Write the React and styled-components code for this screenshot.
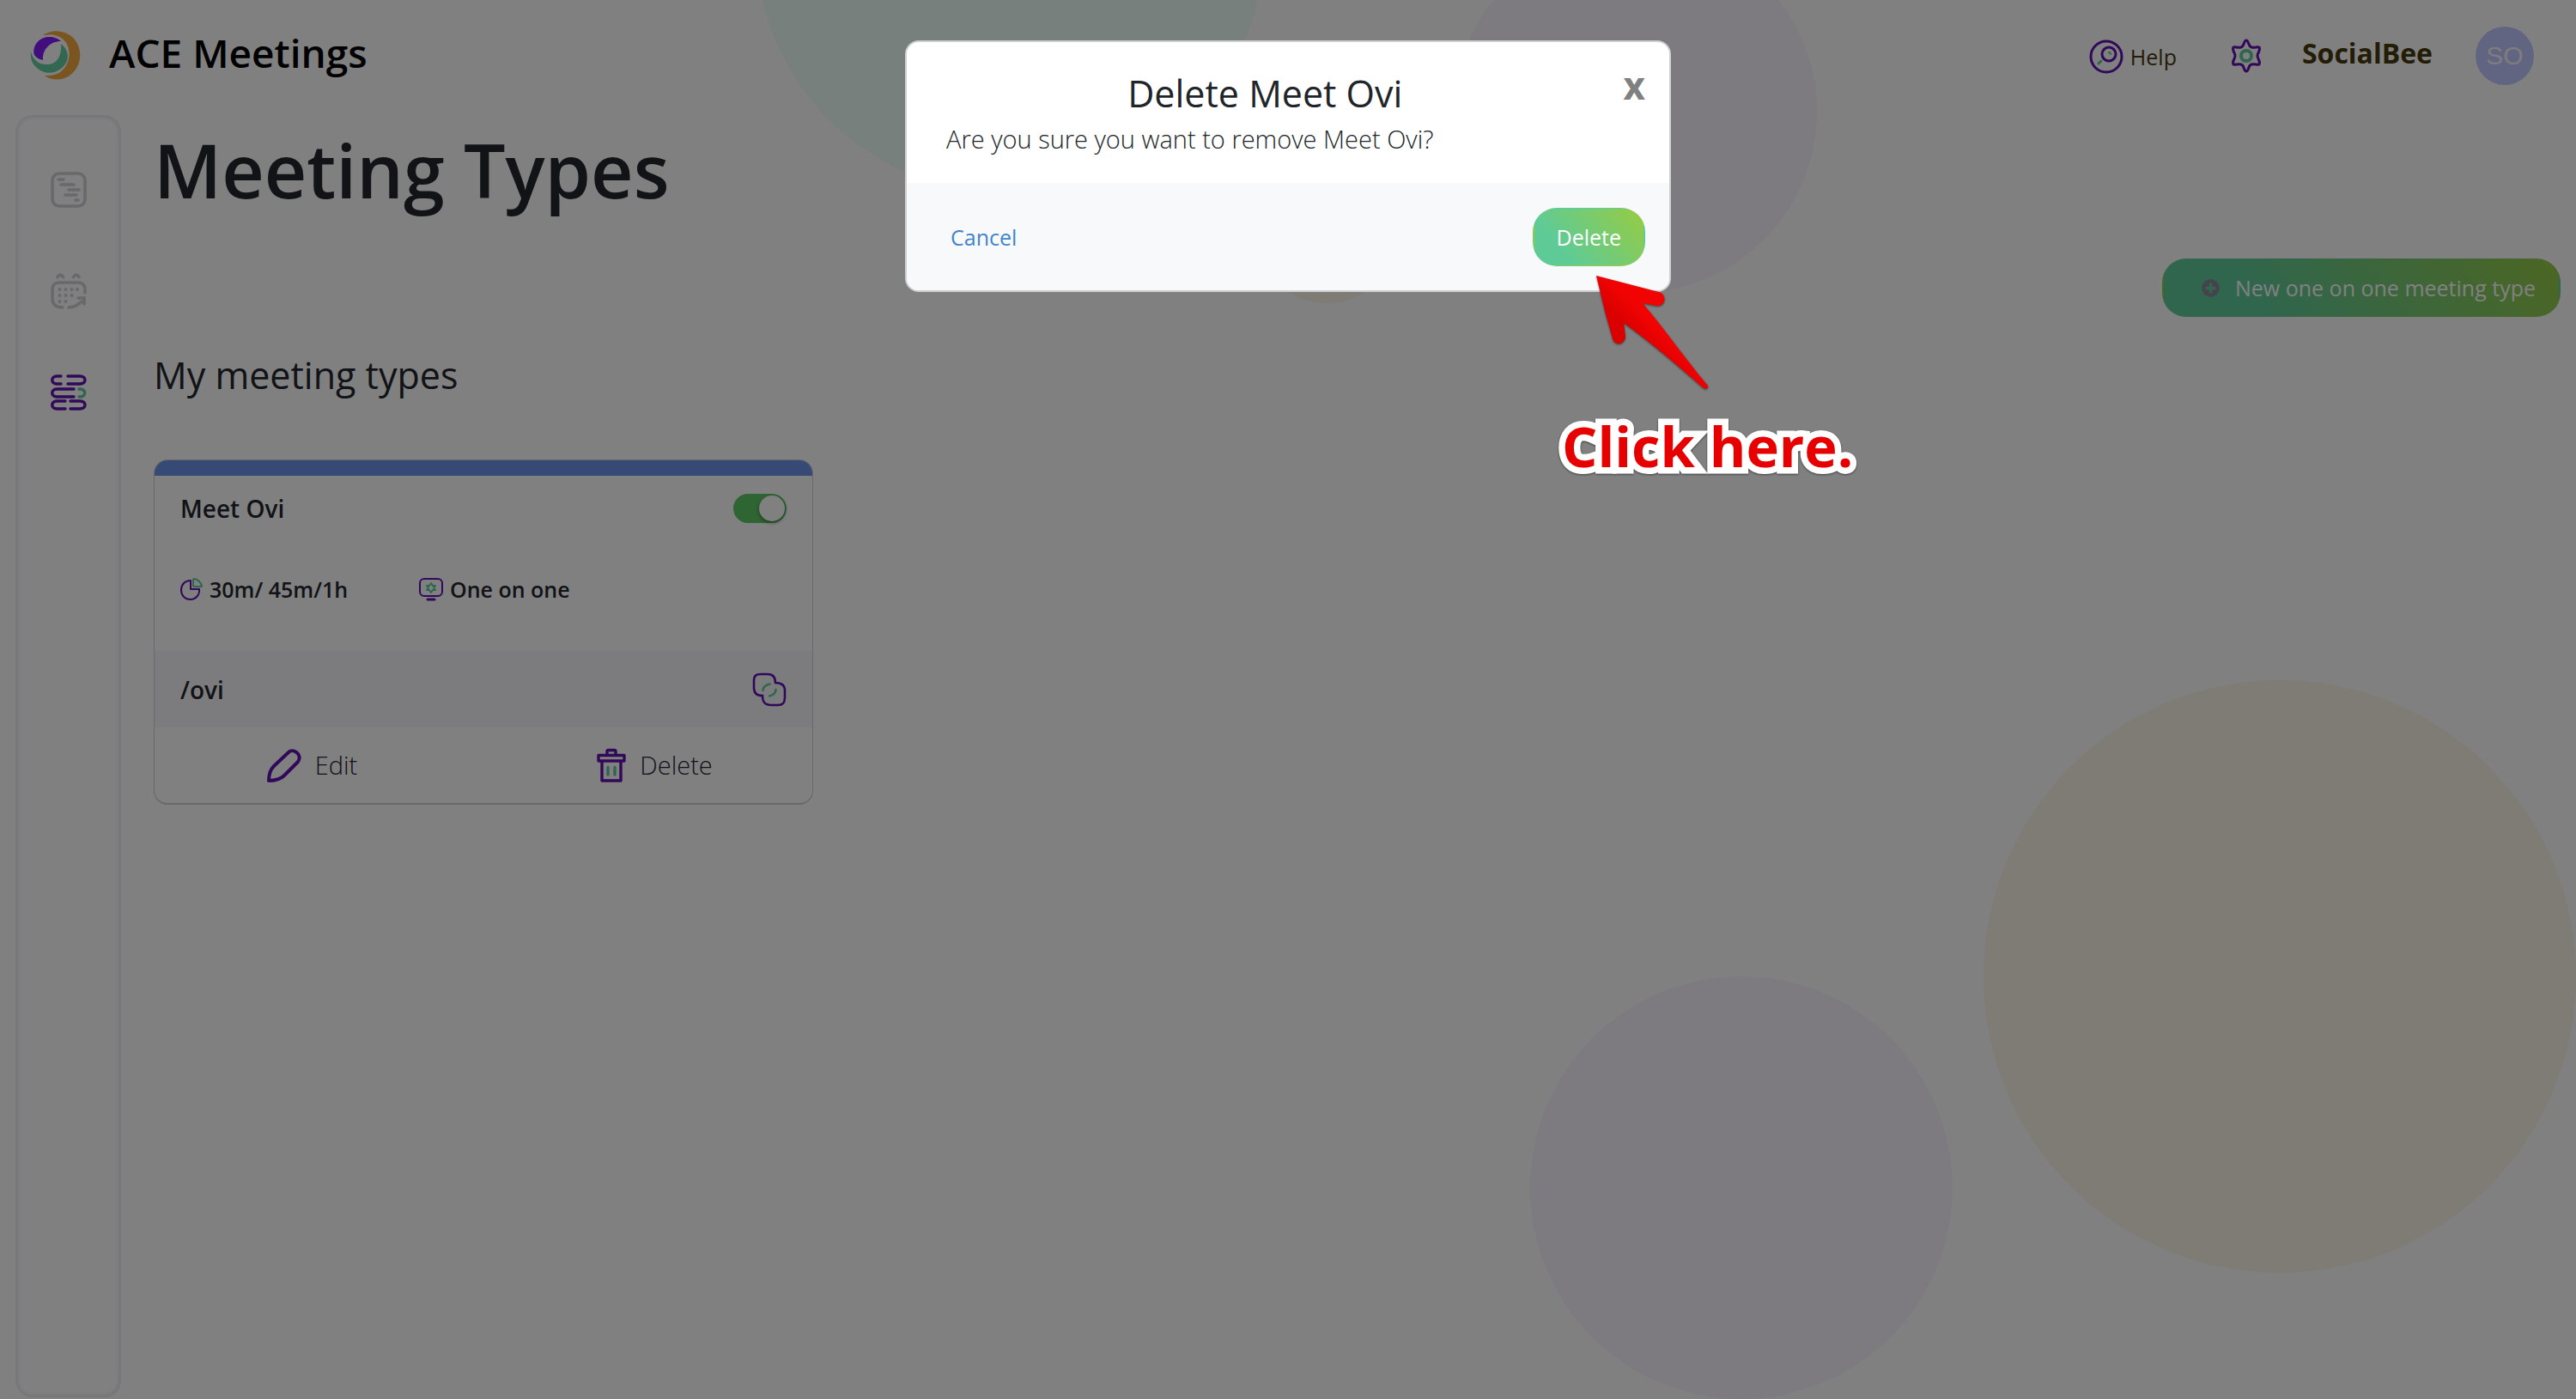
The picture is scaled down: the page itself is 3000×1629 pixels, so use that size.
import React, { useState } from 'react'
import styled, { createGlobalStyle } from 'styled-components';
import { FaPlusCircle } from 'react-icons/fa'

const purple = '#6110ae'
const green = '#5ecb9b'

const GlobalStyle = createGlobalStyle`
    * {
        box-sizing: border-box;
    }

    body {
        margin: 0;
        background: #fefeff;
        color: #212529;
        font-family: 'Open Sans', 'Noto Sans', sans-serif;
        font-size: 28px;
        line-height: 40px;
    }

    button {
        font: inherit;
        cursor: pointer;
    }

    h1, h2, h3, p {
        margin: 0;
    }
`

//icons

const LogoIcon = () => (
    <svg width="60" height="58" viewBox="0 0 60 58">
        <path d="M15 5 C26 -3 43 -1 52 10 C62 23 60 42 46 52 C37 58 25 58 17 52 C31 53 40 47 44 36 C49 21 42 8 29 5 C24 4 20 5 15 5Z" fill="#f5a83c" />
        <path d="M5 28 C2 17 11 7 22 7 C28 7 33 9 36 12 C24 12 14 21 15 34 C10 33 7 31 5 28Z" fill="#8218f5" />
        <path d="M1 24 C3 34 11 40 21 39 C33 38 37 27 36 15 C44 21 47 32 40 40 C32 50 17 52 8 43 C2 38 0 31 1 24Z" fill="#62cda0" />
    </svg>
)

const AgendaIcon = () => (
    <svg width="42" height="42" viewBox="0 0 42 42" fill="none" stroke="#d0d0d2" strokeWidth="3.6" strokeLinecap="round">
        <rect x="2" y="2" width="38" height="38" rx="8" />
        <path d="M9 9h6M12 15h15M21 21h12M17 27h13M29 33h3" />
    </svg>
)

const CalendarIcon = () => (
    <svg width="42" height="42" viewBox="0 0 42 42" fill="none" stroke="#d0d0d2" strokeWidth="3.6" strokeLinecap="round">
        <path d="M8 4.500q3.500-5 6.500 0M26.500 4.500q3.500-5 6.500 0" />
        <path d="M14 40C6 40 2 37 2 30V19C2 13 5 11 11 11H31C37 11 40 13 40 19V23" />
        <path d="M21 40C30 40 31 36 37 33M32 29H39V36" />
        <path d="M10.500 19h.1M17.500 19h.1M24.500 19h.1M31 19h.1M10.500 26h.1M17.500 26h.1M24.500 26h.1M10.500 33h.1M17.500 33h.1" strokeWidth="4" />
    </svg>
)

const TypesIcon = () => (
    <svg width="42" height="42" viewBox="0 0 42 42" fill="none" stroke={purple} strokeWidth="3.4" strokeLinecap="round">
        <path d="M12 2H7C0 2 0 11 7 11H12M20 2H34C42 2 42 11 34 11H20" />
        <path d="M27 17H7C0 17 0 26 7 26H27" />
        <path d="M33 17C42 16 42 27 33 26" stroke={green} />
        <path d="M17 31H7C0 31 0 40 7 40H17M23 31H34C42 31 42 40 34 40H23" />
    </svg>
)

const HelpIcon = () => (
    <svg width="40" height="40" viewBox="0 0 40 40" fill="none" stroke={purple} strokeWidth="3" strokeLinecap="round">
        <circle cx="20" cy="20" r="18" />
        <circle cx="23" cy="17" r="8" />
        <path d="M14 25L11 28" stroke={green} />
        <path d="M23 15Q25 15 25 17" stroke={green} strokeWidth="2" />
    </svg>
)

const GearIcon = () => (
    <svg width="38" height="40" viewBox="0 0 38 40" fill="none" stroke={purple} strokeWidth="3" strokeLinejoin="round">
        <path d="M19 2C22 2 21 9 25 10C29 11 32 9 34 10C36 14 32 16 32 20C32 24 36 26 34 30C32 31 29 29 25 30C21 31 22 38 19 38C16 38 17 31 13 30C9 29 6 31 4 30C2 26 6 24 6 20C6 16 2 14 4 10C6 9 9 11 13 10C17 9 16 2 19 2Z" />
        <circle cx="19" cy="20" r="6" stroke={green} strokeWidth="4" />
    </svg>
)

const DurationIcon = () => (
    <svg width="26" height="26" viewBox="0 0 26 26" fill="none" stroke={purple} strokeWidth="2" strokeLinejoin="round">
        <path d="M12 3V13H22C23 19 18 25 12 25C5 25 1 20 1 14C1 8 5 3 12 3Z" />
        <path d="M16 1C20 1 25 6 25 10H16Q15 10 15 9V2Q15 1 16 1Z" stroke={green} />
    </svg>
)

const ScreenIcon = () => (
    <svg width="28" height="28" viewBox="0 0 28 28" fill="none" stroke={purple} strokeWidth="2" strokeLinecap="round">
        <rect x="1" y="2" width="26" height="20" rx="5" />
        <path d="M10 26H18" strokeWidth="3" />
        <path d="M14 7L16 10L19 10L17 12L19 15L16 15L14 18L12 15L9 15L11 12L9 10L12 10Z" stroke={green} strokeLinejoin="round" />
    </svg>
)

const CopyIcon = () => (
    <svg width="40" height="40" viewBox="0 0 40 40" fill="none" stroke={purple} strokeWidth="2.600" strokeLinecap="round">
        <path d="M12 27C5 27 2 24 2 18V10C2 4 4 2 10 2H18C24 2 27 5 27 12C35 12 38 15 38 21V29C38 35 36 38 30 38H22C15 38 12 35 12 27Z" />
        <path d="M12.500 21Q13 15 20.500 13.500M27.500 20Q27 26 20 27.500" stroke={green} />
    </svg>
)

const PencilIcon = () => (
    <svg width="40" height="40" viewBox="0 0 40 40" fill="none" stroke={purple} strokeWidth="4" strokeLinejoin="round">
        <path d="M2 38C2 30 4 25 8 21L25 5C30 0 42 7 36 16L20 32C16 36 10 38 2 38Z" />
    </svg>
)

const TrashIcon = () => (
    <svg width="34" height="40" viewBox="0 0 34 40" fill="none" stroke={purple} strokeWidth="3.400" strokeLinejoin="round">
        <path d="M2 8.500H32V15H2ZM6 15V38H28V15M12 8V4Q12 2.500 13.500 2.500H20.500Q22 2.500 22 4V8" />
        <path d="M13 22.500V31M21 22.500V31" stroke={green} strokeLinecap="round" />
    </svg>
)

const App = () => {

  const [active, setActive] = useState(true)

  return (
    <>
        <GlobalStyle />
        <Page>
            <Bubbles viewBox="0 0 3000 1629" preserveAspectRatio="xMidYMid slice" aria-hidden="true">
                <circle cx="1176" cy="-70" r="297" fill="#ecfef7" />
                <circle cx="1905" cy="130" r="211" fill="#faf4fc" />
                <circle cx="1545" cy="269" r="84" fill="#fdf5e6" />
                <circle cx="2655" cy="1137" r="345" fill="#fdf5e6" />
                <circle cx="2028" cy="1383" r="246" fill="#faf4fc" />
            </Bubbles>

            <Header>
                <LogoIcon />
                <Brand>ACE Meetings</Brand>
                <HeaderMenu>
                    <HelpLink href="#help"><HelpIcon /> Help</HelpLink>
                    <IconButton aria-label="Settings"><GearIcon /></IconButton>
                    <UserName>SocialBee</UserName>
                    <Avatar>SO</Avatar>
                </HeaderMenu>
            </Header>

            <Body>
                <SideBar>
                    <a href="#agenda" aria-label="Agenda"><AgendaIcon /></a>
                    <a href="#calendar" aria-label="Calendar"><CalendarIcon /></a>
                    <a href="#types" aria-label="Meeting types"><TypesIcon /></a>
                </SideBar>

                <Content>
                    <PageTitle>Meeting Types</PageTitle>
                    <Actions>
                        <GradientButton $wide><FaPlusCircle color="#8c8594" size={21} /> New one on one meeting type</GradientButton>
                    </Actions>
                    <SectionTitle>My meeting types</SectionTitle>

                    <Card>
                        <CardStripe />
                        <CardTop>
                            <CardName>
                                Meet Ovi
                                <Toggle type="checkbox" aria-label="Meet Ovi active" checked={active} onChange={() => setActive(!active)} />
                            </CardName>
                            <CardInfo>
                                <InfoItem><DurationIcon /> 30m/ 45m/1h</InfoItem>
                                <InfoItem><ScreenIcon /> One on one</InfoItem>
                            </CardInfo>
                        </CardTop>
                        <CardLink>
                            /ovi
                            <IconButton aria-label="Copy link"><CopyIcon /></IconButton>
                        </CardLink>
                        <CardActions>
                            <CardButton><PencilIcon /> Edit</CardButton>
                            <CardButton><TrashIcon /> Delete</CardButton>
                        </CardActions>
                    </Card>
                </Content>
            </Body>
        </Page>

        <Overlay>
            <Modal role="dialog" aria-labelledby="modalTitle">
                <ModalBody>
                    <ModalHead>
                        <ModalTitle id="modalTitle">Delete Meet Ovi</ModalTitle>
                        <CloseButton aria-label="Close">x</CloseButton>
                    </ModalHead>
                    <ModalText>Are you sure you want to remove Meet Ovi?</ModalText>
                </ModalBody>
                <ModalFooter>
                    <CancelButton>Cancel</CancelButton>
                    <GradientButton>Delete</GradientButton>
                </ModalFooter>

                <Hint>
                    <HintArrow width="134" height="136" viewBox="0 0 134 136">
                        <defs>
                            <linearGradient id="arrowRed" x1="0" y1="1" x2="1" y2="0">
                                <stop offset="0.400" stopColor="#da0000" />
                                <stop offset="0.550" stopColor="#f20303" />
                            </linearGradient>
                        </defs>
                        <path d="M1 1L74 20C84 23 82 37 71 36L55 33C80 62 104 97 131 129Q132 134 126 132C97 107 68 81 33 56L35 72C34 82 22 83 20 74L12 46Z" fill="url(#arrowRed)" />
                    </HintArrow>
                    <HintText>Click here.</HintText>
                </Hint>
            </Modal>
        </Overlay>
    </>
  )
}

export default App


const Page = styled.div`
    position: relative;
    display: flex;
    flex-direction: column;
    min-height: 100vh;
`

const Bubbles = styled.svg`
    position: absolute;
    top: 0;
    left: 0;
    width: 100%;
    height: 100%;
    z-index: -1;
`

const Header = styled.header`
    display: flex;
    align-items: center;
    height: 130px;
    padding: 0 49px 0 35px;
`

const Brand = styled.div`
    margin-left: 32px;
    padding-bottom: 8px;
    color: #000;
    font-size: 46px;
    font-weight: 600;
    line-height: 60px;
`

const HeaderMenu = styled.nav`
    display: flex;
    align-items: center;
    margin-left: auto;
    color: #453808;
`

const HelpLink = styled.a`
    display: flex;
    align-items: center;
    gap: 8px;
    margin-right: 62px;
    padding-top: 2px;
    color: inherit;
    font-size: 25px;
    text-decoration: none;
`

const IconButton = styled.button`
    display: flex;
    padding: 0;
    border: 0;
    background: none;
`

const UserName = styled.div`
    margin: 0 50px 0 46px;
    padding-bottom: 6px;
    font-size: 32px;
    font-weight: 700;
`

const Avatar = styled.div`
    display: flex;
    align-items: center;
    justify-content: center;
    width: 68px;
    height: 68px;
    border-radius: 50%;
    background: #c2c8ff;
    color: #f6f8fa;
    font-family: 'Liberation Sans', Arial, sans-serif;
    font-size: 30px;
`

const Body = styled.div`
    display: flex;
    flex: 1;
    padding: 4px 18px 2px;
`

const SideBar = styled.nav`
    display: flex;
    flex-direction: column;
    align-items: center;
    gap: 76px;
    width: 123px;
    padding-top: 64px;
    border: 2px solid #ececee;
    border-radius: 20px;
    box-shadow: inset 0 0 4px #dedee0;

    a {
        display: flex;
    }
`

const Content = styled.main`
    flex: 1;
    padding-left: 38px;
`

const PageTitle = styled.h1`
    font-size: 86px;
    font-weight: 600;
    line-height: 128px;
`

const Actions = styled.div`
    display: flex;
    justify-content: flex-end;
    margin-top: 39px;
`

const GradientButton = styled.button`
    display: flex;
    align-items: center;
    justify-content: center;
    gap: 18px;
    height: 68px;
    padding: ${({ $wide }) => ($wide ? '0 27px 0 44px' : '0 26px')};
    border: 2px solid transparent;
    border-radius: 28px;
    background: linear-gradient(50deg, #5ecb97 25%, #97cb42);
    color: #fff;
    font-size: 25px;
`

const SectionTitle = styled.h2`
    margin-top: 38px;
    font-size: 43px;
    font-weight: 400;
    line-height: 60px;
`

const Card = styled.section`
    display: flex;
    flex-direction: column;
    width: 768px;
    max-width: 100%;
    margin-top: 68px;
    border: 1px solid #d0d0d2;
    border-bottom-width: 2px;
    border-radius: 16px;
    overflow: hidden;
`

const CardStripe = styled.div`
    height: 18px;
    background: #6d92e6;
`

const CardTop = styled.div`
    height: 204px;
    padding: 18px 30px;
    font-weight: 600;
`

const CardName = styled.div`
    display: flex;
    align-items: center;
    justify-content: space-between;
`

const Toggle = styled.input`
    appearance: none;
    display: flex;
    align-items: center;
    justify-content: ${({ checked }) => (checked ? 'flex-end' : 'flex-start')};
    width: 62px;
    height: 34px;
    margin: 0;
    padding: 0 2px;
    border-radius: 17px;
    background: ${({ checked }) => (checked ? '#5cc860' : '#ccc')};
    cursor: pointer;

    &:before {
        content: "";
        width: 30px;
        height: 30px;
        border-radius: 50%;
        background: #fff;
        box-shadow: 0 2px 4px rgba(0,0,0,0.4);
    }
`

const CardInfo = styled.div`
    display: grid;
    grid-template-columns: 278px 1fr;
    margin-top: 54px;
    font-size: 25px;
`

const InfoItem = styled.div`
    display: flex;
    align-items: center;
    gap: 8px;
`

const CardLink = styled.div`
    display: flex;
    align-items: center;
    justify-content: space-between;
    height: 89px;
    padding: 0 30px;
    background: #f7f7f8;
    font-weight: 600;
`

const CardActions = styled.div`
    display: grid;
    grid-template-columns: 1fr 1fr;
    gap: 32px;
    height: 88px;
`

const CardButton = styled.button`
    display: flex;
    align-items: center;
    justify-content: center;
    gap: 16px;
    border: 0;
    background: none;
    color: #212529;
    font-size: 29px;
    font-weight: 300;
`

const Overlay = styled.div`
    position: fixed;
    inset: 0;
    display: flex;
    align-items: flex-start;
    justify-content: center;
    padding-top: 47px;
    background: rgba(1,2,4,0.5);
`

const Modal = styled.div`
    position: relative;
    width: 892px;
    border: 2px solid #cdcfd1;
    border-radius: 16px;
    background: #fff;
`

const ModalBody = styled.div`
    height: 164px;
    padding: 30px 28px 0 46px;
`

const ModalHead = styled.div`
    display: flex;
    align-items: flex-start;
`

const ModalTitle = styled.h3`
    flex: 1;
    padding-right: 46px;
    font-size: 43px;
    font-weight: 400;
    line-height: 60px;
    text-align: center;
`

const CloseButton = styled.button`
    padding: 0;
    border: 0;
    background: none;
    color: #808080;
    font-size: 44px;
    font-weight: 700;
    line-height: 40px;
`

const ModalText = styled.p`
    margin-top: 3px;
    font-size: 29px;
    font-weight: 300;
`

const ModalFooter = styled.div`
    display: flex;
    align-items: center;
    justify-content: space-between;
    height: 125px;
    padding: 0 28px 0 51px;
    border-radius: 0 0 14px 14px;
    background: #f7f9fb;
`

const CancelButton = styled.button`
    padding: 0;
    border: 0;
    background: none;
    color: #4384cb;
    font-size: 25px;
`

//the callout pointing to the delete button, sits on top of the modal corner
const Hint = styled.div`
    position: absolute;
    top: 271px;
    left: 757px;
    color: #e60000;
    white-space: nowrap;
`

const HintArrow = styled.svg`
    display: block;
    margin-left: 45px;
    filter: drop-shadow(0 1px 1px rgba(0,0,0,0.5));
`

const HintText = styled.div`
    margin-top: 18px;
    padding-left: 6px;
    font-size: 65px;
    font-weight: 700;
    line-height: 90px;
    -webkit-text-stroke: 15px #fff;
    stroke-linejoin: round;
    paint-order: stroke fill;
    filter: drop-shadow(0 1px 1px rgba(0,0,0,0.5));
`
